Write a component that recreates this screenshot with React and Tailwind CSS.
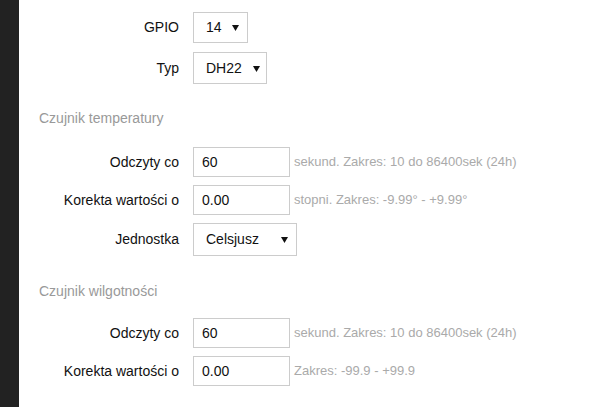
import React from "react";

const Label = ({ children }) => (
  <div className="w-[160px] shrink-0 text-right text-[14px] text-[#111]">{children}</div>
);

const Arrow = () => (
  <svg width="7" height="7" viewBox="0 0 7 7" className="shrink-0">
    <path d="M0 1 L7 1 L3.5 7 Z" fill="#111" />
  </svg>
);

const Select = ({ value, width, height, pr }) => (
  <div
    className={`ml-[14px] flex items-center justify-between border border-[#ccc] bg-white pl-[12px] text-[14px] text-[#111] ${width} ${height} ${pr}`}
  >
    <span>{value}</span>
    <Arrow />
  </div>
);

const Input = ({ value, hint }) => (
  <>
    <div className="ml-[14px] flex h-[30px] w-[97px] items-center border border-[#ccc] bg-white pl-[8px] text-[14px] text-[#111]">
      {value}
    </div>
    <span className="ml-[4px] text-[13px] text-[#aaa]">{hint}</span>
  </>
);

export default function App() {
  return (
    <div className="flex h-[407px] w-[611px] bg-white font-['Liberation_Sans',Arial,sans-serif]">
      <div className="w-[19px] shrink-0 bg-[#222]" />
      <div className="flex flex-1 flex-col">
        {/* Sensor basics */}
        <div className="mt-[12px] flex items-center">
          <Label>GPIO</Label>
          <Select value="14" width="w-[55px]" height="h-[31px]" pr="pr-[8px]" />
        </div>
        <div className="mt-[9px] flex items-center">
          <Label>Typ</Label>
          <Select value="DH22" width="w-[74px]" height="h-[32px]" pr="pr-[6px]" />
        </div>

        {/* Temperature */}
        <div className="mt-[24px] pl-[20px] text-[14px] leading-[20px] text-[#999]">Czujnik temperatury</div>
        <div className="mt-[19px] flex items-center">
          <Label>Odczyty co</Label>
          <Input value="60" hint="sekund. Zakres: 10 do 86400sek (24h)" />
        </div>
        <div className="mt-[8px] flex items-center">
          <Label>Korekta wartości o</Label>
          <Input value="0.00" hint="stopni. Zakres: -9.99° - +9.99°" />
        </div>
        <div className="mt-[8px] flex items-center">
          <Label>Jednostka</Label>
          <Select value="Celsjusz" width="w-[104px]" height="h-[33px]" pr="pr-[8px]" />
        </div>

        {/* Humidity */}
        <div className="mt-[25px] pl-[20px] text-[14px] leading-[20px] text-[#999]">Czujnik wilgotności</div>
        <div className="mt-[17px] flex items-center">
          <Label>Odczyty co</Label>
          <Input value="60" hint="sekund. Zakres: 10 do 86400sek (24h)" />
        </div>
        <div className="mt-[8px] flex items-center">
          <Label>Korekta wartości o</Label>
          <Input value="0.00" hint="Zakres: -99.9 - +99.9" />
        </div>
      </div>
    </div>
  );
}
